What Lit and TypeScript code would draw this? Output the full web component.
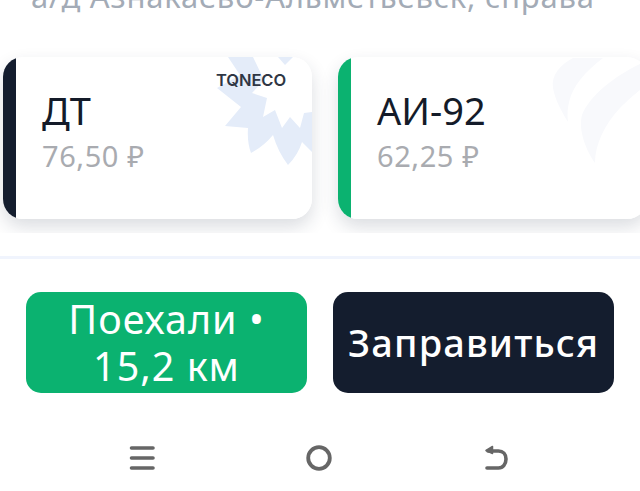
import { LitElement, html, css } from "lit";
import { customElement } from "lit/decorators.js";

@customElement("app-root")
export class AppRoot extends LitElement {
  static styles = css`
    :host { display: block; width: 640px; height: 491px; overflow: hidden; background: #fff; font-family: "Noto Sans", "Open Sans", sans-serif; }
    .road { margin: -23px 0 0 31px; height: 37px; line-height: 38px; font-size: 31px; color: #a3abb6; white-space: nowrap; letter-spacing: .026em; }
    .cards { display: flex; gap: 26px; padding: 43px 0 14px 3px; height: 162px; overflow: hidden; }
    .card { position: relative; flex: 0 0 309px; height: 162px; box-sizing: border-box; border-radius: 20px; padding: 29px 0 0 39px; overflow: hidden; box-shadow: 0 8px 18px rgba(30, 45, 70, .16); }
    .dark { background: linear-gradient(90deg, #141d2e 13px, #fff 13px); }
    .green { background: linear-gradient(90deg, #0bb270 13px, #fff 13px); }
    .fuel { position: relative; font-size: 38px; line-height: 48px; color: #141b29; }
    .price { position: relative; margin-top: 2px; font-size: 29px; line-height: 40px; color: #a9abb0; letter-spacing: .02em; }
    .mark { position: absolute; top: 0; }
    .logo { position: absolute; top: 13px; left: 213px; font: 600 16.500px/20px "Inter", sans-serif; letter-spacing: -.005em; color: #2f3644; }
    .rule { height: 3px; margin-top: 23px; background: #f0f4fd; }
    .actions { display: flex; gap: 26px; padding: 33px 0 0 26px; }
    .btn { flex: 0 0 281px; height: 101px; box-sizing: border-box; border-radius: 15px; display: flex; align-items: center; justify-content: center; text-align: center; color: #fff; line-height: 47px; }
    .go { background: #0bb270; padding: 0 30px; font-size: 39.500px; letter-spacing: .025em; }
    .fill { background: #141d2e; font-weight: 500; font-size: 38px; letter-spacing: .03em; }
    .nav { display: grid; grid-template-columns: repeat(3, 177px); justify-content: center; justify-items: center; padding: 52px 2px 0 0; }
    .nav svg { display: block; }
  `;

  render() {
    return html`
      <div class="road">а/д Азнакаево-Альметьевск, справа</div>
      <div class="cards">
        <div class="card dark">
          <svg class="mark" style="left:197px" width="112" height="110" viewBox="200 57 112 110" fill="#e4ecf9">
            <path d="M228 57L240 75L217 88L241 107L225 126L248 128Q247 142 251 153Q264 146 273 135Q278 152 288 165Q298 155 302 142L312 152V112L304 113L300 128L290 117L282 128L275 110L263 117L267 98L252 93L264 80L253 57Z" />
            <polygon points="278,57 293,57 285,65" />
          </svg>
          <div class="logo">TQNECO</div>
          <div class="fuel">ДТ</div>
          <div class="price">76,50 ₽</div>
        </div>
        <div class="card green">
          <svg class="mark" style="left:202px" width="100" height="120" viewBox="540 57 100 120" fill="#f8f9fc">
            <path d="M573 58C560 65 551 75 553 88C555 100 562 112 568 122C566 108 570 92 580 80C587 71 595 64 603 58Z" />
            <path d="M640 64C615 76 590 95 582 115C578 130 586 150 595 163C595 145 604 125 620 108C628 100 635 94 640 90Z" />
          </svg>
          <div class="fuel">АИ-92</div>
          <div class="price">62,25 ₽</div>
        </div>
      </div>
      <div class="rule"></div>
      <div class="actions">
        <div class="btn go">Поехали • 15,2 км</div>
        <div class="btn fill">Заправиться</div>
      </div>
      <div class="nav">
        <svg width="26" height="26" viewBox="0 0 26 26" stroke="#666" stroke-width="3.600" stroke-linecap="round" fill="none">
          <path d="M2.500 3H24M2.500 13H24M2.500 23H24" />
        </svg>
        <svg width="26" height="26" viewBox="0 0 26 26" stroke="#666" stroke-width="3.800" fill="none">
          <circle cx="13" cy="13" r="10.800" />
        </svg>
        <svg width="26" height="26" viewBox="0 0 26 26" stroke="#666" stroke-width="3.600" stroke-linecap="round" stroke-linejoin="round" fill="none">
          <path d="M5 6H15.500C20 6 23 9.500 23 14C23 19 20 23 15.500 23H4" />
          <path d="M9.500 1.500L3 5.500L9.500 8.500Z" fill="#666" stroke-width="1.500" />
        </svg>
      </div>
    `;
  }
}
